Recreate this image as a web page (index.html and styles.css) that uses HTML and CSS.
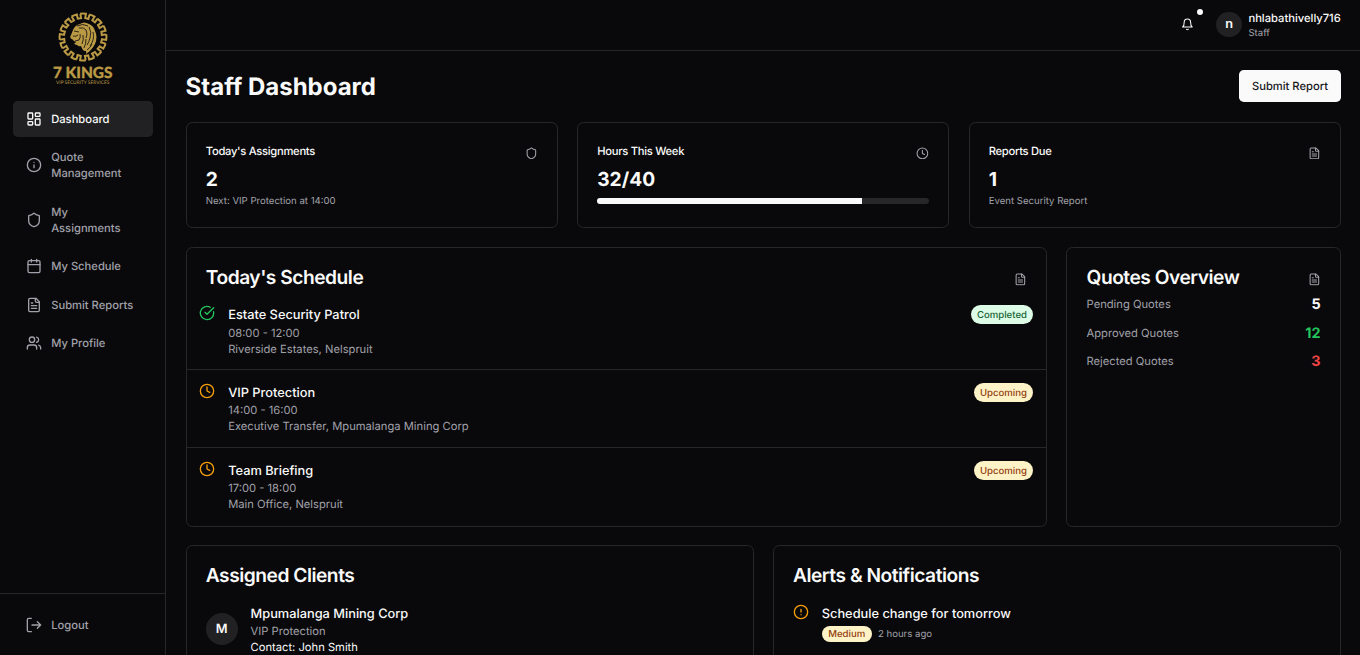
FILE: index.html
```html
<!DOCTYPE html>
<html lang="en">
<head>
<meta charset="utf-8">
<title>Staff Dashboard</title>
<link rel="stylesheet" href="styles.css">
</head>
<body>
<svg class="defs" width="0" height="0">
  <symbol id="shield" viewBox="0 0 24 24"><path d="M20 13c0 5-3.5 7.5-7.66 8.95a1 1 0 0 1-.67-.01C7.5 20.5 4 18 4 13V6a1 1 0 0 1 1-1c2 0 4.5-1.2 6.24-2.72a1.17 1.17 0 0 1 1.52 0C14.51 3.81 17 5 19 5a1 1 0 0 1 1 1z"/></symbol>
  <symbol id="file" viewBox="0 0 24 24"><path d="M15 2H6a2 2 0 0 0-2 2v16a2 2 0 0 0 2 2h12a2 2 0 0 0 2-2V7Z"/><path d="M14 2v4a2 2 0 0 0 2 2h4M10 9H8M16 13H8M16 17H8"/></symbol>
  <symbol id="clock" viewBox="0 0 24 24"><circle cx="12" cy="12" r="10"/><path d="M12 6v6l4 2"/></symbol>
  <symbol id="grid" viewBox="0 0 24 24"><rect width="7" height="9" x="3" y="3" rx="1"/><rect width="7" height="5" x="14" y="3" rx="1"/><rect width="7" height="9" x="14" y="12" rx="1"/><rect width="7" height="5" x="3" y="16" rx="1"/></symbol>
  <symbol id="info" viewBox="0 0 24 24"><circle cx="12" cy="12" r="10"/><path d="M12 16v-4M12 8h.01"/></symbol>
  <symbol id="alert" viewBox="0 0 24 24"><circle cx="12" cy="12" r="10"/><path d="M12 8v4M12 16h.01"/></symbol>
  <symbol id="calendar" viewBox="0 0 24 24"><path d="M8 2v4M16 2v4M3 10h18"/><rect width="18" height="18" x="3" y="4" rx="2"/></symbol>
  <symbol id="users" viewBox="0 0 24 24"><path d="M16 21v-2a4 4 0 0 0-4-4H6a4 4 0 0 0-4 4v2"/><circle cx="9" cy="7" r="4"/><path d="M22 21v-2a4 4 0 0 0-3-3.87M16 3.13a4 4 0 0 1 0 7.75"/></symbol>
  <symbol id="logout" viewBox="0 0 24 24"><path d="M8 22H4a2 2 0 0 1-2-2V4a2 2 0 0 1 2-2h4M9 12h13M17 7l5 5-5 5"/></symbol>
  <symbol id="bell" viewBox="0 0 24 24"><path d="M6 8a6 6 0 0 1 12 0c0 7 3 9 3 9H3s3-2 3-9M10.3 21a1.94 1.94 0 0 0 3.4 0"/></symbol>
  <symbol id="check" viewBox="0 0 24 24"><path d="M21.8 10A10 10 0 1 1 17 3.34"/><path d="m9 11 3 3L22 4"/></symbol>
</svg>
<div class="app">
  <aside class="sidebar">
    <div class="logo">
      <svg class="emblem" viewBox="-25 -25 50 50">
        <defs><path id="key" d="M-2.9-23.2Q0-23.8 2.9-23.2L2.2-19L5.4-18.1L6.4-22.3"/></defs>
        <g class="ring">
          <use href="#key"/><use href="#key" transform="rotate(22.5)"/><use href="#key" transform="rotate(45)"/><use href="#key" transform="rotate(67.5)"/>
          <use href="#key" transform="rotate(90)"/><use href="#key" transform="rotate(112.5)"/><use href="#key" transform="rotate(135)"/><use href="#key" transform="rotate(157.5)"/>
          <use href="#key" transform="rotate(180)"/><use href="#key" transform="rotate(202.5)"/><use href="#key" transform="rotate(225)"/><use href="#key" transform="rotate(247.5)"/>
          <use href="#key" transform="rotate(270)"/><use href="#key" transform="rotate(292.5)"/><use href="#key" transform="rotate(315)"/><use href="#key" transform="rotate(337.5)"/>
        </g>
        <path class="mane" d="M-10-7Q-8-12-3-13Q1-16 6-13Q11-11 12-6Q15 0 12 7Q9 13 3 17Q4 13 1 14Q-1 12-2 9Q-4 10-6 8L-9 7L-7 5L-9 4L-11 2Q-14 1-12-2Z"/>
        <path class="hair" d="M-9-6L-4-5M-10-1Q-7 0-5-2M-8 4L-4 3Q-2 0-3-3M-4-9Q1-10 3-7Q5-3 3 1M6-10Q9-5 7 1Q6 5 4 8M10-5Q12 2 7 9M0-2Q1 3-1 7M3 2Q3 7 1 11M-6-11Q0-14 5-11M9 7Q7 11 4 13"/>
      </svg>
      <div class="brand">7 KINGS</div>
      <div class="tagline">VIP SECURITY SERVICES</div>
    </div>
    <nav class="nav">
      <a class="link active"><svg class="icon"><use href="#grid"/></svg><span>Dashboard</span></a>
      <a class="link"><svg class="icon"><use href="#info"/></svg><span>Quote<br>Management</span></a>
      <a class="link"><svg class="icon"><use href="#shield"/></svg><span>My<br>Assignments</span></a>
      <a class="link"><svg class="icon"><use href="#calendar"/></svg><span>My Schedule</span></a>
      <a class="link"><svg class="icon"><use href="#file"/></svg><span>Submit Reports</span></a>
      <a class="link"><svg class="icon"><use href="#users"/></svg><span>My Profile</span></a>
    </nav>
    <div class="foot"><a class="link"><svg class="icon"><use href="#logout"/></svg><span>Logout</span></a></div>
  </aside>
  <div class="page">
    <header class="top">
      <div class="bell"><svg class="icon sm"><use href="#bell"/></svg><span class="dot"></span></div>
      <div class="avatar small">n</div>
      <div class="user"><div class="uname">nhlabathivelly716</div><div class="role">Staff</div></div>
    </header>
    <main class="main">
      <div class="heading"><h1>Staff Dashboard</h1><button class="btn">Submit Report</button></div>
      <div class="stats">
        <section class="card stat">
          <div class="stathead"><span>Today's Assignments</span><svg class="icon sm"><use href="#shield"/></svg></div>
          <div class="num">2</div><div class="sub">Next: VIP Protection at 14:00</div>
        </section>
        <section class="card stat">
          <div class="stathead"><span>Hours This Week</span><svg class="icon sm"><use href="#clock"/></svg></div>
          <div class="num">32/40</div><div class="track"><div class="fill"></div></div>
        </section>
        <section class="card stat">
          <div class="stathead"><span>Reports Due</span><svg class="icon sm"><use href="#file"/></svg></div>
          <div class="num">1</div><div class="sub">Event Security Report</div>
        </section>
      </div>
      <div class="middle">
        <section class="card schedule">
          <div class="cardhead"><h2>Today's Schedule</h2><svg class="icon sm"><use href="#file"/></svg></div>
          <div class="item first"><svg class="icon green"><use href="#check"/></svg><div class="info"><div class="name">Estate Security Patrol</div><div class="meta">08:00 - 12:00</div><div class="meta">Riverside Estates, Nelspruit</div></div><span class="badge done">Completed</span></div>
          <div class="item"><svg class="icon amber"><use href="#clock"/></svg><div class="info"><div class="name">VIP Protection</div><div class="meta">14:00 - 16:00</div><div class="meta">Executive Transfer, Mpumalanga Mining Corp</div></div><span class="badge">Upcoming</span></div>
          <div class="item"><svg class="icon amber"><use href="#clock"/></svg><div class="info"><div class="name">Team Briefing</div><div class="meta">17:00 - 18:00</div><div class="meta">Main Office, Nelspruit</div></div><span class="badge">Upcoming</span></div>
        </section>
        <section class="card">
          <div class="cardhead"><h2>Quotes Overview</h2><svg class="icon sm"><use href="#file"/></svg></div>
          <div class="quotes">
            <div class="quote"><span>Pending Quotes</span><b>5</b></div>
            <div class="quote"><span>Approved Quotes</span><b class="green">12</b></div>
            <div class="quote"><span>Rejected Quotes</span><b class="red">3</b></div>
          </div>
        </section>
      </div>
      <div class="bottom">
        <section class="card panel">
          <h2>Assigned Clients</h2>
          <div class="client"><div class="avatar">M</div><div><div class="name">Mpumalanga Mining Corp</div><div class="meta">VIP Protection</div><div class="contact">Contact: John Smith</div></div></div>
        </section>
        <section class="card panel">
          <h2>Alerts &amp; Notifications</h2>
          <div class="notice"><svg class="icon amber"><use href="#alert"/></svg><div><div class="name">Schedule change for tomorrow</div><div class="when"><span class="badge tight">Medium</span><span class="ago">2 hours ago</span></div></div></div>
        </section>
      </div>
    </main>
  </div>
</div>
</body>
</html>
```
FILE: styles.css
```css
* { box-sizing: border-box; }
html { font-size: 12.8px; }
body { margin: 0; height: 655px; overflow: hidden; background: #09090b; color: #fafafa; font-family: Inter, "Liberation Sans", sans-serif; line-height: 1.5; text-rendering: geometricPrecision; }
h1, h2 { margin: 0; }
.defs { display: block; position: absolute; }
.app { display: flex; height: 655px; overflow: hidden; }
.sidebar { width: 166.4px; flex: none; border-right: 1px solid #27272a; display: flex; flex-direction: column; }
.logo { height: 101.4px; padding-top: 11.5px; display: flex; flex-direction: column; align-items: center; color: #bb9a45; }
.emblem { width: 50px; height: 50px; flex: none; }
.ring { fill: none; stroke: #bb9a45; stroke-width: 2; }
.mane { fill: #bb9a45; }
.hair { fill: none; stroke: #09090b; stroke-width: .8; }
.brand { font: 900 15.4px/16px Lato, sans-serif; margin-top: 3px; white-space: nowrap; -webkit-text-stroke: .3px #bb9a45; }
.tagline { font: 400 4.8px/6px Lato, sans-serif; margin-top: -1px; white-space: nowrap; }
.nav { flex: 1; padding: 0 12.8px; display: flex; flex-direction: column; gap: 3.2px; }
.link { display: flex; align-items: center; gap: 9.6px; padding: 9.6px 12.8px; border-radius: 4.8px; color: #a1a1aa; font-size: 11.2px; line-height: 16px; font-weight: 500; white-space: nowrap; }
.link.active { background: #212123; color: #fafafa; }
.link:nth-child(5) { padding: 10px 12.8px 9.2px; }
.foot { border-top: 1px solid #27272a; padding: 13.4px 12.8px 12px; height: 62px; }
.icon { width: 16px; height: 16px; flex: none; fill: none; stroke: currentColor; stroke-width: 2; stroke-linecap: round; stroke-linejoin: round; }
.icon.sm { width: 12.8px; height: 12.8px; }
.page { flex: 1; min-width: 0; }
.top { height: 51.2px; border-bottom: 1px solid #27272a; display: flex; align-items: center; justify-content: flex-end; padding: 0 19.2px 1.2px 0; }
.bell { position: relative; display: flex; padding: 9.6px; margin-right: 12.8px; }
.dot { position: absolute; top: .6px; right: .4px; width: 6.4px; height: 6.4px; border-radius: 50%; background: #fafafa; }
.avatar { width: 32px; height: 32px; flex: none; border-radius: 50%; background: #212123; display: flex; align-items: center; justify-content: center; font-weight: 600; font-size: 12.8px; padding-top: 1px; }
.avatar.small { width: 25.6px; height: 25.6px; margin-right: 6.4px; }
.uname { font-size: 11.2px; line-height: 16px; font-weight: 500; }
.role { font-size: 9.6px; line-height: 12.8px; color: #a1a1aa; padding-top: 1.6px; margin-bottom: -1.6px; }
.main { padding: 19.2px 19.2px 0; display: flex; flex-direction: column; gap: 19.2px; }
.heading { display: flex; align-items: center; justify-content: space-between; }
h1 { font-size: 24px; line-height: 28.8px; font-weight: 700; padding-top: 1.4px; }
.btn { height: 32px; padding: 0 12.8px; border: 0; border-radius: 4.8px; background: #fafafa; color: #18181b; font: 500 11.2px/16px Inter, sans-serif; text-rendering: inherit; }
.stats { display: grid; grid-template-columns: repeat(3, 1fr); gap: 19.2px; }
.card { border: 1px solid #27272a; border-radius: 6.4px; min-width: 0; }
.stat { height: 106px; padding: 19.2px; }
.stathead { display: flex; justify-content: space-between; align-items: flex-end; height: 17.6px; font-size: 11.2px; line-height: 18.6px; font-weight: 500; letter-spacing: -.025em; }
.stathead span { align-self: flex-start; }
.stathead .icon, .cardhead .icon { color: #a1a1aa; }
.num { margin-top: 7.2px; font-size: 19.2px; line-height: 25.6px; font-weight: 700; }
.sub { margin-top: 3.8px; font-size: 9.6px; line-height: 12.8px; color: #a1a1aa; }
.track { height: 6.4px; margin-top: 5.6px; border-radius: 4px; background: #27272a; overflow: hidden; }
.fill { width: 79.8%; height: 100%; background: #fafafa; }
.middle { display: grid; grid-template-columns: 861.6px 1fr; gap: 19.2px; height: 278.4px; margin-bottom: .2px; }
.cardhead { height: 44.6px; padding: 19.2px 19.2px 0; display: flex; justify-content: space-between; align-items: flex-start; }
.cardhead .icon { margin-top: 5.8px; }
h2 { font-size: 19.2px; line-height: 20px; font-weight: 600; letter-spacing: -.025em; }
.item { display: flex; gap: 12.8px; padding: 12.8px; border-bottom: 1px solid #27272a; height: 77.8px; align-items: flex-start; }
.item:last-child { border: 0; }
.item.first .name { margin-bottom: -.2px; }
.info { flex: 1; }
.name { font-size: 12.8px; line-height: 19.2px; font-weight: 500; padding-top: .8px; margin-bottom: -.8px; }
.meta, .contact { font-size: 11.2px; line-height: 16px; }
.meta { color: #a1a1aa; }
.badge { padding: 4.8px 6.4px 1.6px; border-radius: 10px; background: #fef3c7; color: #92400e; font-size: 9.6px; line-height: 12.8px; font-weight: 500; }
.badge.done { background: #dcfce7; color: #166534; }
.badge.tight { padding: 3.4px 6.4px 0; }
.green { color: #22c55e; }
.amber { color: #f59e0b; }
.red { color: #ef4444; }
.quotes { padding: .8px 19.2px 0; display: flex; flex-direction: column; gap: 6.2px; }
.quote { display: flex; justify-content: space-between; align-items: center; color: #a1a1aa; font-size: 11.2px; line-height: 22.4px; }
.quote b { font-size: 14.4px; font-weight: 700; padding-top: 1px; margin-bottom: -1px; }
.quote b:not([class]) { color: #fafafa; }
.bottom { display: grid; grid-template-columns: 1fr 1fr; gap: 19.2px; }
.panel { height: 180px; padding: 19.2px; }
.client { display: flex; align-items: center; gap: 12.8px; margin-top: 19px; }
.notice { display: flex; gap: 12.8px; margin-top: 19.4px; }
.notice .icon { margin-top: .4px; }
.when { display: flex; align-items: center; gap: 6.4px; margin-top: 2.4px; color: #a1a1aa; font-size: 9.6px; line-height: 12.8px; }
.ago { padding-top: 3.4px; }
```
